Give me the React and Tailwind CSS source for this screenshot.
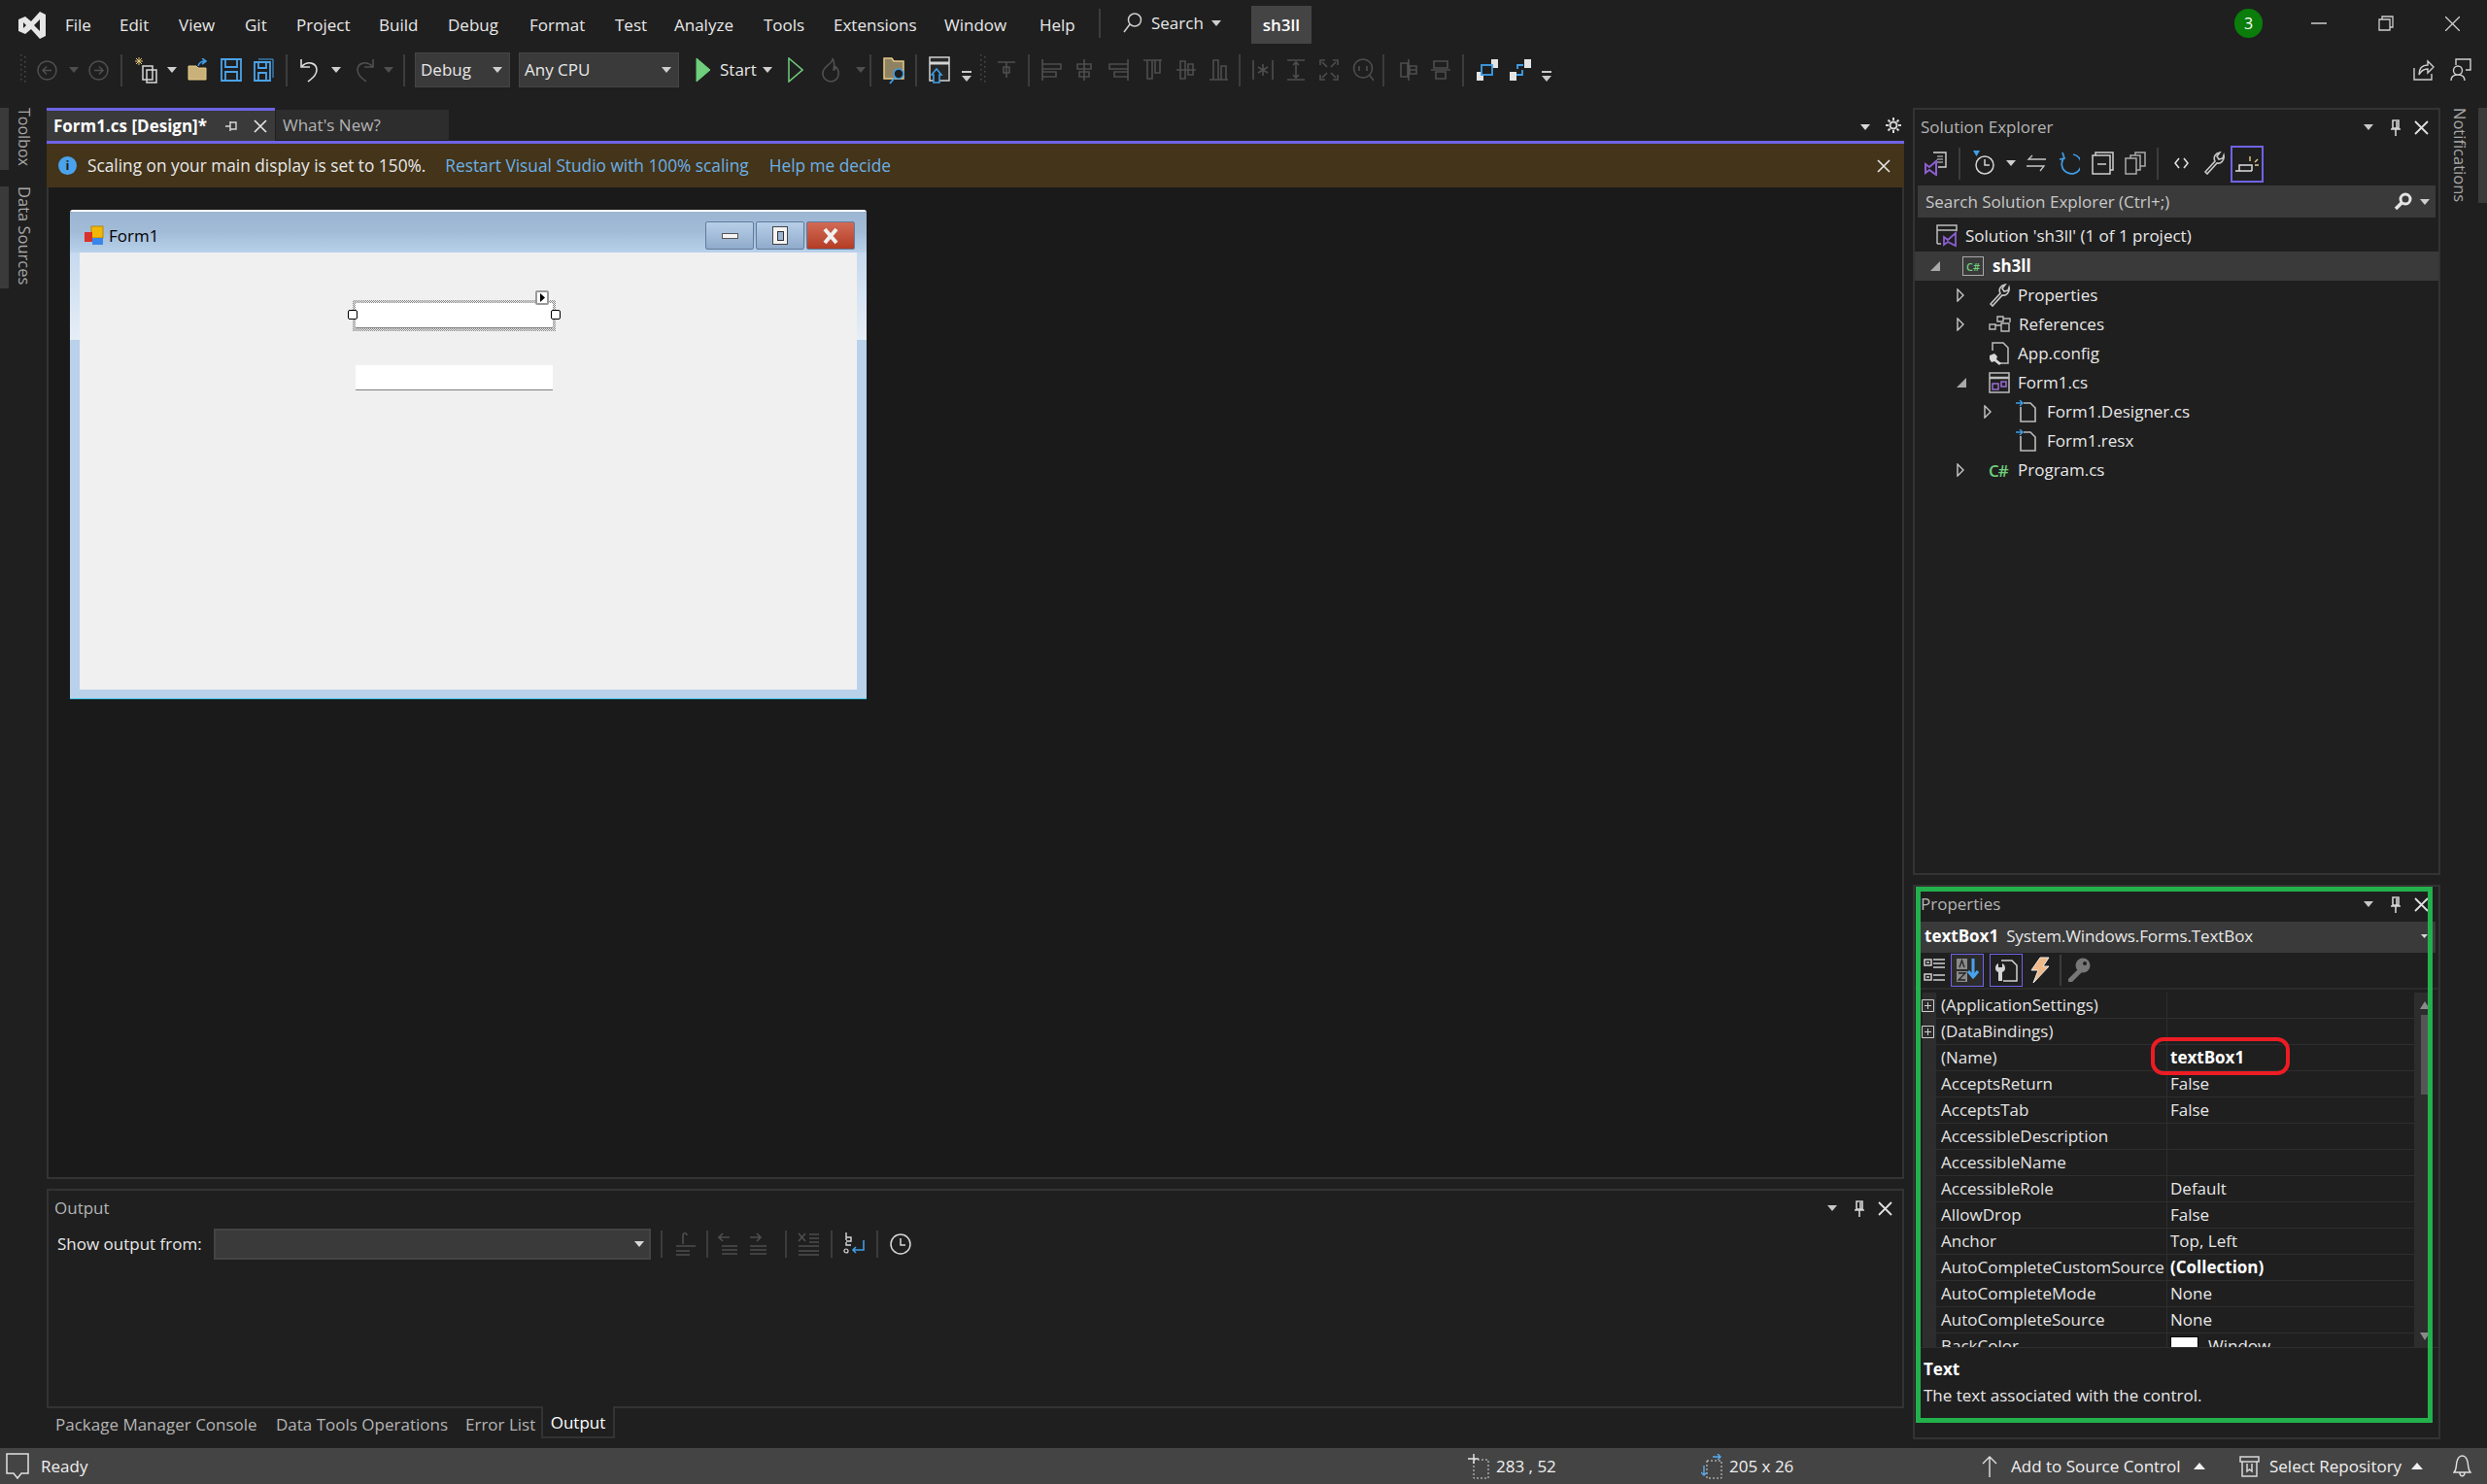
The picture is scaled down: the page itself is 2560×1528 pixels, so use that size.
import { Fragment } from "react";

// small helpers for the toolbar slots and icons
const Slot = ({ w, children }) => (
  <div className={`${w} h-full shrink-0 flex items-center`}>{children}</div>
);

const Ic = ({ w = 22, h = 22, vb, className = "", sw = 1.5, children }) => (
  <svg
    width={w}
    height={h}
    viewBox={vb || `0 0 ${w} ${h}`}
    fill="none"
    stroke="currentColor"
    strokeWidth={sw}
    className={`shrink-0 ${className}`}
  >
    {children}
  </svg>
);

const Tri = ({ className = "text-[#cfcfcf]" }) => (
  <svg width="10" height="6" viewBox="0 0 10 6" className={`shrink-0 ${className}`}>
    <path d="M0 0H10L5 6Z" fill="currentColor" />
  </svg>
);

const Sep = ({ h = "h-[33px]" }) => <div className={`w-[2px] ${h} bg-[#3c3c3c]`} />;

const VsLogo = () => (
  <svg width="30" height="30" viewBox="0 0 30 30" className="shrink-0">
    <path
      fillRule="evenodd"
      d="M1 9L8 6L14 11L23 1L29 4V26L23 29L14 19L8 24L1 21ZM6 12V18L9 15ZM23 9L17 15L23 21Z"
      fill="#e6e6e6"
    />
  </svg>
);

const Grip = ({ h = 30 }) => (
  <svg width="8" height={h} className="shrink-0">
    {Array.from({ length: Math.floor(h / 5) }).map((_, i) => (
      <Fragment key={i}>
        <rect x="1" y={i * 5} width="1.5" height="1.5" fill="#4a4a4a" />
        <rect x="5" y={i * 5 + 2} width="1.5" height="1.5" fill="#4a4a4a" />
      </Fragment>
    ))}
  </svg>
);

const CircleArrow = ({ dir }) => (
  <Ic w={21} h={21} className="text-[#4f4f4f]">
    <circle cx="10.5" cy="10.5" r="9.5" />
    <path d={dir === "l" ? "M15 10.5H6M10 6.5L6 10.5L10 14.5" : "M6 10.5H15M11 6.5L15 10.5L11 14.5"} />
  </Ic>
);

const NewProject = () => (
  <Ic w={25} h={28} className="text-[#d8d8d8]">
    <path d="M9 10H19V24H9Z M13 14H23V27H13Z" />
    <path d="M5 1V9M1 5H9M2 2L8 8M8 2L2 8" stroke="#e8c97a" strokeWidth="1" />
  </Ic>
);

const OpenFolder = () => (
  <svg width="22" height="24" viewBox="0 0 22 24" className="shrink-0">
    <path d="M1 8H9L11 10H19V22H1Z" fill="#c8b27a" stroke="#e8cc86" />
    <path d="M11 8C12 4 15 3 18 3M15 0L19 3L15 6" fill="none" stroke="#3f9ee8" strokeWidth="1.6" />
  </svg>
);

const Save = ({ all }) => (
  <Ic w={22} h={24} className="text-[#4aa3ea]" sw={1.8}>
    {all && <path d="M5 1H20V20" strokeWidth="1" />}
    <path d={all ? "M1 4H17V23H1Z M5 4V10H13V4 M5 23V15H13V23" : "M1 1H21V23H1Z M5 1V9H17V1 M5 23V14H17V23"} />
  </Ic>
);

const Undo = ({ redo }) => (
  <Ic w={22} h={26} className={redo ? "text-[#4f4f4f]" : "text-[#dcdcdc]"} sw={1.6}>
    <g transform={redo ? "matrix(-1 0 0 1 22 0)" : undefined}>
      <path d="M2 2V10H11M3 9C9 3 18 6 18 13C18 18 14 21 9 25" />
    </g>
  </Ic>
);

const Play = ({ outline }) => (
  <svg width="16" height="26" viewBox="0 0 16 26" className="shrink-0">
    <path
      d="M1 1L15 13L1 25Z"
      fill={outline ? "none" : "#6fcf7c"}
      stroke="#6fcf7c"
      strokeWidth={outline ? 1.5 : 1}
    />
  </svg>
);

const Flame = () => (
  <Ic w={20} h={26} className="text-[#4f4f4f]" sw={1.6}>
    <path d="M12 1C13 6 4 8 2 15C1 21 6 25 10 25C15 25 19 21 18 15C18 12 16 11 15 9C15 12 14 13 13 13C14 9 14 5 12 1Z" />
  </Ic>
);

const FolderSearch = () => (
  <svg width="24" height="30" viewBox="0 0 24 30" className="shrink-0">
    <path d="M1 3H9L11 6H21V24H1Z" fill="#8f8263" stroke="#e8cc86" strokeWidth="1.5" />
    <circle cx="16" cy="19" r="5" fill="#1f1f1f" stroke="#3f9ee8" strokeWidth="1.6" />
    <path d="M12 23L7 29" stroke="#3f9ee8" strokeWidth="1.8" />
  </svg>
);

const WindowUp = () => (
  <svg width="23" height="30" viewBox="0 0 23 30" className="shrink-0">
    <path d="M1 2H21V26H1Z" fill="#262626" stroke="#d4d4d4" strokeWidth="1.5" />
    <path d="M1 8H21" stroke="#d4d4d4" strokeWidth="3" />
    <path d="M3 20L8 14L13 20H11V28H5V20Z" fill="#1f1f1f" stroke="#3f9ee8" strokeWidth="1.6" />
  </svg>
);

const DropLine = () => (
  <svg width="10" height="12" viewBox="0 0 10 12" className="shrink-0 mt-[14px]">
    <path d="M0 0H10V2H0ZM0 5H10L5 11Z" fill="#c8c8c8" />
  </svg>
);

// the greyed out layout icons on the designer toolbar
const Align = ({ d, w = 22 }) => (
  <Ic w={w} h={24} className="text-[#4e4e4e]" sw={1.6}>
    <path d={d} />
  </Ic>
);

const Swap = ({ second }) => (
  <svg width="24" height="24" viewBox="0 0 24 24" className="shrink-0">
    <rect x="16" y="1" width="7" height="9" fill="#e4e4e4" />
    <rect x="1" y="14" width="7" height="9" fill="#e4e4e4" />
    {second ? (
      <path d="M9 11V7H15M8 17H14V12" fill="none" stroke="#3f9ee8" strokeWidth="1.8" />
    ) : (
      <rect x="6" y="7" width="11" height="10" fill="#1f1f1f" stroke="#3f9ee8" strokeWidth="1.8" />
    )}
  </svg>
);

const Wrench = ({ w = 22, h = 24 }) => (
  <Ic w={w} h={h} vb="0 0 22 24" className="text-[#c8c8c8]" sw={1.6}>
    <path d="M2 21L12 10C10 6 12 2 17 1L14 5L16 8L20 7L21 4C22 9 18 13 14 12L4 23Z" />
  </Ic>
);

const DocIcon = () => (
  <svg width="22" height="24" viewBox="0 0 22 24" className="shrink-0">
    <path d="M5 7V22H20V8L15 3H8" fill="none" stroke="#bdbdbd" strokeWidth="1.6" />
    <path d="M0 3H7M4 0L7 3L4 6" fill="none" stroke="#3f9ee8" strokeWidth="1.4" />
  </svg>
);

const TreeArrow = ({ open }) =>
  open ? (
    <svg width="10" height="10" viewBox="0 0 10 10" className="shrink-0">
      <path d="M10 0V10H0Z" fill="#a9a9a9" />
    </svg>
  ) : (
    <svg width="8" height="14" viewBox="0 0 8 14" className="shrink-0">
      <path d="M1 1L7 7L1 13Z" fill="none" stroke="#c8c8c8" strokeWidth="1.4" />
    </svg>
  );

const PanelHeader = ({ title }) => (
  <div className="h-[36px] shrink-0 flex items-center pl-[6px] pr-[10px] text-[#b4b4b4]">
    <span className="flex-1">{title}</span>
    <Tri className="text-[#c8c8c8]" />
    <svg width="12" height="17" viewBox="0 0 12 17" className="ml-[17px] text-[#d4d4d4]">
      <path d="M3 1H9V9H3ZM1 10H11M6 10V17M7 2V9" fill="none" stroke="currentColor" strokeWidth="1.6" />
    </svg>
    <svg width="15" height="15" viewBox="0 0 15 15" className="ml-[13px] text-[#e0e0e0]">
      <path d="M1 1L14 14M14 1L1 14" fill="none" stroke="currentColor" strokeWidth="1.8" />
    </svg>
  </div>
);

const menu = [
  ["File", "w-[56px]"],
  ["Edit", "w-[61px]"],
  ["View", "w-[68px]"],
  ["Git", "w-[53px]"],
  ["Project", "w-[85px]"],
  ["Build", "w-[71px]"],
  ["Debug", "w-[84px]"],
  ["Format", "w-[88px]"],
  ["Test", "w-[61px]"],
  ["Analyze", "w-[92px]"],
  ["Tools", "w-[72px]"],
  ["Extensions", "w-[114px]"],
  ["Window", "w-[98px]"],
  ["Help", "w-[61px]"],
];

const tree = [
  { label: "Properties", pl: "pl-[43px]", arrow: "closed", icon: <Wrench /> },
  {
    label: "References",
    pl: "pl-[43px]",
    arrow: "closed",
    icon: (
      <Ic w={23} h={18} className="text-[#bdbdbd]" sw={1.4}>
        <path d="M1 9H7V14H1Z M9 1H15V6H9Z M13 8H21V16H13Z M7 10H13 M15 3H22V7" />
      </Ic>
    ),
  },
  {
    label: "App.config",
    pl: "pl-[43px]",
    arrow: null,
    icon: (
      <Ic w={22} h={24} className="text-[#bdbdbd]" sw={1.5}>
        <path d="M4 9V1H15L20 6V22H12" />
        <path d="M1 14L6 12L9 15L8 18L13 22L11 24L6 20L3 21L1 18Z" fill="#d8d8d8" stroke="none" />
      </Ic>
    ),
  },
  {
    label: "Form1.cs",
    pl: "pl-[43px]",
    arrow: "open",
    icon: (
      <Ic w={22} h={22} className="text-[#bdbdbd]" sw={1.5}>
        <path d="M1 1H21V21H1Z" />
        <path d="M1 6H21" strokeWidth="2.5" />
        <path d="M4 12H10V18H4Z M13 10H18V15H13Z" stroke="#9a6fd6" />
      </Ic>
    ),
  },
  { label: "Form1.Designer.cs", pl: "pl-[71px]", arrow: "closed", icon: <DocIcon />, text: "ml-[10px]" },
  { label: "Form1.resx", pl: "pl-[71px]", arrow: null, icon: <DocIcon />, text: "ml-[10px]" },
  {
    label: "Program.cs",
    pl: "pl-[43px]",
    arrow: "closed",
    icon: (
      <span className="w-[22px] shrink-0 text-[#6fcf7c] font-semibold text-[17px] leading-none tracking-[-1px]">
        C#
      </span>
    ),
  },
];

const props = [
  ["(ApplicationSettings)", "", "plus"],
  ["(DataBindings)", "", "plus"],
  ["(Name)", "textBox1", "name"],
  ["AcceptsReturn", "False"],
  ["AcceptsTab", "False"],
  ["AccessibleDescription", ""],
  ["AccessibleName", ""],
  ["AccessibleRole", "Default"],
  ["AllowDrop", "False"],
  ["Anchor", "Top, Left"],
  ["AutoCompleteCustomSource", "(Collection)", "bold"],
  ["AutoCompleteMode", "None"],
  ["AutoCompleteSource", "None"],
  ["BackColor", "Window", "color"],
];

const Handle = ({ className }) => (
  <div className={`absolute top-[7px] w-[10px] h-[10px] bg-white border border-black rounded-[2px] ${className}`} />
);

const TextBox = ({ selected }) => (
  <div className="relative w-[203px] h-[26px] ml-[284px]">
    {selected && (
      <div className="absolute -inset-[3px] bg-[repeating-conic-gradient(#8a8a8a_0_25%,#f0f0f0_0_50%)] bg-[length:2px_2px]" />
    )}
    <div className="absolute inset-0 bg-white border-b border-[#808080]" />
    {selected && (
      <>
        <Handle className="-left-[8px]" />
        <Handle className="-right-[8px]" />
        <div className="absolute -top-[13px] right-[4px] w-[14px] h-[15px] bg-white border-2 border-[#9a9a9a] rounded-[2px] flex items-center justify-center">
          <svg width="5" height="9" viewBox="0 0 5 9">
            <path d="M0 0L5 4.5L0 9Z" fill="black" />
          </svg>
        </div>
      </>
    )}
  </div>
);

const Toolbar = () => (
  <div className="h-[40px] shrink-0 flex items-center pl-[20px]">
    <Slot w="w-[18px]"><Grip h={32} /></Slot>
    <Slot w="w-[33px]"><CircleArrow dir="l" /></Slot>
    <Slot w="w-[20px]"><Tri className="text-[#4f4f4f]" /></Slot>
    <Slot w="w-[33px]"><CircleArrow dir="r" /></Slot>
    <Slot w="w-[14px]"><Sep /></Slot>
    <Slot w="w-[34px]"><NewProject /></Slot>
    <Slot w="w-[21px]"><Tri /></Slot>
    <Slot w="w-[34px]"><OpenFolder /></Slot>
    <Slot w="w-[34px]"><Save /></Slot>
    <Slot w="w-[33px]"><Save all /></Slot>
    <Slot w="w-[14px]"><Sep /></Slot>
    <Slot w="w-[33px]"><Undo /></Slot>
    <Slot w="w-[23px]"><Tri /></Slot>
    <Slot w="w-[31px]"><Undo redo /></Slot>
    <Slot w="w-[20px]"><Tri className="text-[#4f4f4f]" /></Slot>
    <Slot w="w-[12px]"><Sep /></Slot>
    <div className="w-[98px] h-[36px] shrink-0 bg-[#3a3a3a] border border-[#444] flex items-center justify-between pl-[5px] pr-[7px]">
      <span>Debug</span>
      <Tri />
    </div>
    <div className="w-[165px] h-[36px] shrink-0 ml-[9px] bg-[#3a3a3a] border border-[#444] flex items-center justify-between pl-[5px] pr-[7px]">
      <span>Any CPU</span>
      <Tri />
    </div>
    <div className="w-[17px] shrink-0" />
    <Slot w="w-[25px]"><Play /></Slot>
    <Slot w="w-[44px]"><span>Start</span></Slot>
    <Slot w="w-[26px]"><Tri /></Slot>
    <Slot w="w-[34px]"><Play outline /></Slot>
    <Slot w="w-[36px]"><Flame /></Slot>
    <Slot w="w-[14px]"><Tri className="text-[#4f4f4f]" /></Slot>
    <Slot w="w-[14px]"><Sep /></Slot>
    <Slot w="w-[33px]"><FolderSearch /></Slot>
    <Slot w="w-[14px]"><Sep /></Slot>
    <Slot w="w-[34px]"><WindowUp /></Slot>
    <Slot w="w-[18px]"><DropLine /></Slot>
    <Slot w="w-[18px]"><Grip h={32} /></Slot>
    <Slot w="w-[32px]"><Align d="M1 4H19M10 4V20M7 9H13V15H7Z" w={20} /></Slot>
    <Slot w="w-[14px]"><Sep /></Slot>
    <Slot w="w-[35px]"><Align d="M1 1V23M1 6H20V11H1M1 14H15V19H1" /></Slot>
    <Slot w="w-[33px]"><Align d="M9 1V23M2 6H16V11H2ZM4 14H14V19H4Z" w={18} /></Slot>
    <Slot w="w-[36px]"><Align d="M21 1V23M2 6H21V11H2ZM7 14H21V19H7Z" /></Slot>
    <Slot w="w-[34px]"><Align d="M1 2H20M5 2V21H10V2M13 2V15H18V2" /></Slot>
    <Slot w="w-[34px]"><Align d="M1 12H21M5 3V21H10V3ZM13 6V17H18V6Z" /></Slot>
    <Slot w="w-[31px]"><Align d="M1 22H20M5 2V22H10V2ZM13 8V22H18V8Z" /></Slot>
    <Slot w="w-[14px]"><Sep /></Slot>
    <Slot w="w-[34px]"><Align d="M1 2V22M21 2V22M11 6V18M6 9L16 15M16 9L6 15" /></Slot>
    <Slot w="w-[34px]"><Align d="M2 2H20M2 22H20M11 4V20M8 7L11 4L14 7M8 17L11 20L14 17" /></Slot>
    <Slot w="w-[35px]"><Align d="M2 7V2H7M15 2H20V7M2 17V22H7M15 22H20V17M4 4L9 9M18 4L13 9M4 20L9 15M18 20L13 15" /></Slot>
    <Slot w="w-[31px]"><Align d="M11 1A9.5 9.5 0 1 0 11 20A9.5 9.5 0 1 0 11 1ZM18 18L23 24M7 8V13M15 8V13" /></Slot>
    <Slot w="w-[18px]"><Sep /></Slot>
    <Slot w="w-[31px]"><Align d="M9 1V23M1 5H8V19H1ZM10 8H17V16H10ZM9 12H17" w={18} /></Slot>
    <Slot w="w-[33px]"><Align d="M1 12H21M4 3H18V10H4ZM6 14H16V21H6Z" /></Slot>
    <Slot w="w-[14px]"><Sep /></Slot>
    <Slot w="w-[34px]"><Swap /></Slot>
    <Slot w="w-[34px]"><Swap second /></Slot>
    <Slot w="w-[10px]"><DropLine /></Slot>
    <div className="flex-1" />
    <div className="w-[38px] shrink-0 text-[#cfcfcf]">
      <Ic w={22} h={22} sw={1.4}>
        <path d="M1 9V21H19V15M6 16C6 9 10 6 15 6V2L21 8L15 14V10C11 10 8 12 6 16Z" />
      </Ic>
    </div>
    <div className="w-[38px] shrink-0 text-[#cfcfcf]">
      <Ic w={22} h={24} sw={1.4}>
        <path d="M6 7V1H21V12H16M8 8A4.5 4.5 0 1 0 8 17A4.5 4.5 0 1 0 8 8ZM1 23C1 18 4 17 8 17C12 17 15 18 15 23" />
      </Ic>
    </div>
  </div>
);

const MenuBar = () => (
  <div className="h-[52px] shrink-0 flex items-center">
    <div className="w-[67px] pl-[18px] shrink-0">
      <VsLogo />
    </div>
    {menu.map(([label, w]) => (
      <div key={label} className={`${w} shrink-0`}>
        {label}
      </div>
    ))}
    <div className="w-[25px] shrink-0 h-[30px] mb-[4px]">
      <div className="w-[2px] h-full bg-[#3c3c3c]" />
    </div>
    <Ic w={20} h={22} className="text-[#cfcfcf] mb-[4px]" sw={1.5}>
      <path d="M12 1A6.5 6.5 0 1 0 12 14A6.5 6.5 0 1 0 12 1ZM7 12L1 20" />
    </Ic>
    <span className="ml-[9px] mb-[4px]">Search</span>
    <Tri className="ml-[8px] mb-[4px] text-[#cfcfcf]" />
    <div className="ml-[31px] mb-[1px] w-[62px] h-[39px] bg-[#444] flex items-center justify-center font-semibold text-white">
      sh3ll
    </div>
    <div className="flex-1" />
    <div className="w-[29px] h-[30px] mb-[4px] rounded-full bg-[#0a7d0a] flex items-center justify-center text-white text-[16px]">
      3
    </div>
    <Ic w={16} h={2} className="text-[#cfcfcf] ml-[50px] mb-[4px]">
      <path d="M0 1H16" />
    </Ic>
    <Ic w={16} h={16} className="text-[#cfcfcf] ml-[53px] mb-[4px]" sw={1.3}>
      <path d="M1 4H12V15H1ZM4 4V1H15V12H12" />
    </Ic>
    <Ic w={15} h={15} className="text-[#cfcfcf] ml-[53px] mr-[28px] mb-[4px]" sw={1.3}>
      <path d="M0 0L15 15M15 0L0 15" />
    </Ic>
  </div>
);

const WinBtn = ({ className, children }) => (
  <div className={`w-[50px] h-[29px] rounded-[2px] border border-[#5f7c9e] flex items-center justify-center ${className}`}>
    {children}
  </div>
);

const FormWindow = () => (
  <div className="w-[820px] h-[504px] ml-[22px] mt-[23px] flex flex-col border-t-2 border-white rounded-t-[3px] overflow-hidden">
    <div className="h-[42px] shrink-0 bg-gradient-to-b from-[#9cb5d2] via-[#a2bcd8] to-[#b9d1ea] flex items-center pl-[14px] pr-[12px] pt-[7px]">
      <svg width="21" height="21" viewBox="0 0 21 21" className="shrink-0">
        <rect x="8" y="1" width="12" height="12" fill="#f2b705" stroke="#b98600" />
        <rect x="1" y="7" width="8" height="10" fill="#d9312b" />
        <rect x="9" y="13" width="11" height="7" fill="#3a86e8" />
      </svg>
      <span className="ml-[5px] text-black flex-1">Form1</span>
      <div className="flex gap-[2px]">
        <WinBtn className="bg-gradient-to-b from-[#b8cfe8] to-[#8fabcb]">
          <div className="w-[17px] h-[6px] bg-[#f4f4f4] border border-[#555]" />
        </WinBtn>
        <WinBtn className="bg-gradient-to-b from-[#b8cfe8] to-[#8fabcb]">
          <div className="w-[16px] h-[19px] bg-[#f4f4f4] border border-[#444] flex items-center justify-center">
            <div className="w-[7px] h-[10px] border border-[#333] bg-[#9cb5d2]" />
          </div>
        </WinBtn>
        <WinBtn className="bg-gradient-to-b from-[#d26a55] to-[#b33c24] border-[#5a1a1a]">
          <svg width="18" height="18" viewBox="0 0 18 18">
            <path d="M3 2L15 16M15 2L3 16" stroke="#f0f0f0" strokeWidth="4" />
          </svg>
        </WinBtn>
      </div>
    </div>
    <div className="flex-1 flex min-h-0">
      <div className="w-[10px] flex flex-col">
        <div className="h-[90px] bg-gradient-to-b from-[#c6d9ee] to-[#e6eef7]" />
        <div className="flex-1 bg-[#b9d1ea]" />
      </div>
      <div className="flex-1 bg-[#f0f0f0] flex flex-col pt-[52px]">
        <TextBox selected />
        <div className="h-[38px] shrink-0" />
        <TextBox />
      </div>
      <div className="w-[10px] flex flex-col">
        <div className="h-[90px] bg-gradient-to-b from-[#c6d9ee] to-[#e6eef7]" />
        <div className="flex-1 bg-[#b9d1ea]" />
      </div>
    </div>
    <div className="h-[10px] shrink-0 bg-[#b9d1ea] border-b border-[#39c2e0]" />
  </div>
);

const OutputToolbar = () => (
  <div className="h-[38px] shrink-0 flex items-center pl-[9px]">
    <span className="w-[161px] shrink-0">Show output from:</span>
    <div className="w-[450px] h-[32px] shrink-0 bg-[#3a3a3a] border-2 border-[#444] flex items-center justify-end pr-[5px]">
      <Tri className="text-[#d8d8d8]" />
    </div>
    <div className="w-[10px] shrink-0" />
    <Slot w="w-[14px]"><Sep h="h-[28px]" /></Slot>
    <Slot w="w-[33px]">
      <Align d="M9 12V3C9 0 13 0 13 3M2 14H22M2 19H16M2 23H16" />
    </Slot>
    <Slot w="w-[12px]"><Sep h="h-[28px]" /></Slot>
    <Slot w="w-[32px]">
      <Align d="M1 5H12M5 1L1 5L5 9M4 14H20M4 18H20M4 22H20" />
    </Slot>
    <Slot w="w-[37px]">
      <Align d="M1 5H12M8 1L12 5L8 9M1 14H18M1 18H18M1 22H18" />
    </Slot>
    <Slot w="w-[13px]"><Sep h="h-[28px]" /></Slot>
    <Slot w="w-[34px]">
      <Align d="M1 1L8 9M8 1L1 9M12 2H22M12 6H22M12 10H22M1 14H22M1 19H22M1 23H22" />
    </Slot>
    <Slot w="w-[13px]"><Sep h="h-[28px]" /></Slot>
    <Slot w="w-[34px]">
      <svg width="23" height="26" viewBox="0 0 23 26">
        <path d="M3 1V9M3 6H8V10H3M8 14H3V11" fill="none" stroke="#d8d8d8" strokeWidth="1.4" />
        <path d="M21 9V19H10M13 16L10 19L13 22" fill="none" stroke="#3f9ee8" strokeWidth="1.6" />
        <circle cx="3" cy="20" r="2" fill="none" stroke="#d8d8d8" strokeWidth="1.2" />
      </svg>
    </Slot>
    <Slot w="w-[14px]"><Sep h="h-[28px]" /></Slot>
    <Ic w={22} h={26} vb="0 0 22 22" className="text-[#d8d8d8]" sw={1.5}>
      <circle cx="11" cy="11" r="10" />
      <path d="M11 5V12H16" />
    </Ic>
  </div>
);

const SolutionExplorer = () => (
  <div className="h-[790px] shrink-0 border-2 border-[#333] flex flex-col">
    <PanelHeader title="Solution Explorer" />
    <div className="h-[38px] shrink-0 flex items-center pl-[10px]">
      <Slot w="w-[35px]">
        <svg width="24" height="26" viewBox="0 0 24 26">
          <path d="M9 2H22V17H14" fill="none" stroke="#d4d4d4" strokeWidth="1.4" />
          <path d="M13 6H19M13 9H19M13 12H19" stroke="#d4d4d4" strokeWidth="1.2" />
          <path d="M1 14L5 17L12 11V25L5 20L1 23Z" fill="#1f1f1f" stroke="#8d5fd3" strokeWidth="2" />
        </svg>
      </Slot>
      <Slot w="w-[15px]"><Sep /></Slot>
      <Slot w="w-[34px]">
        <svg width="22" height="26" viewBox="0 0 22 26">
          <path d="M0 0H7L3.5 6Z" fill="#3f9ee8" />
          <circle cx="12" cy="15" r="9" fill="none" stroke="#d4d4d4" strokeWidth="1.5" />
          <path d="M12 9V15H17" fill="none" stroke="#d4d4d4" strokeWidth="1.5" />
        </svg>
      </Slot>
      <Slot w="w-[21px]"><Tri /></Slot>
      <Slot w="w-[33px]">
        <Ic w={20} h={18} className="text-[#c8c8c8]" sw={1.3}>
          <path d="M20 5H2L6 1M0 12H18L14 17" />
        </Ic>
      </Slot>
      <Slot w="w-[34px]">
        <Ic w={22} h={24} className="text-[#3f9ee8]" sw={1.7}>
          <path d="M4 1L6 7L1 8M6 6A10 10 0 1 0 15 3" />
        </Ic>
      </Slot>
      <Slot w="w-[34px]">
        <Ic w={23} h={24} className="text-[#cfcfcf]" sw={1.5}>
          <path d="M1 4H19V23H1ZM4 4V1H22V19H19M6 13H15" />
        </Ic>
      </Slot>
      <Slot w="w-[33px]">
        <Ic w={22} h={24} className="text-[#aaa]" sw={1.5}>
          <path d="M1 7H12V23H1ZM6 7V4H16V19H12M11 4V1H21V15H16" />
        </Ic>
      </Slot>
      <Slot w="w-[18px]"><Sep /></Slot>
      <Slot w="w-[30px]">
        <Ic w={15} h={12} className="text-[#e0e0e0]" sw={1.6}>
          <path d="M5 1L1 6L5 11M10 1L14 6L10 11" />
        </Ic>
      </Slot>
      <Slot w="w-[28px]"><Wrench /></Slot>
      <div className="w-[34px] h-[38px] mt-[1px] shrink-0 border-2 border-[#6f63e6] flex items-center justify-center">
        <svg width="24" height="16" viewBox="0 0 24 16">
          <path d="M0 15H17M4 15V9H17V15" fill="none" stroke="#e0e0e0" strokeWidth="1.5" />
          <path d="M15 0V5M20 6L23 3M20 9H24" stroke="#e8cc86" strokeWidth="1.4" fill="none" />
        </svg>
      </div>
    </div>
    <div className="h-[33px] mt-[4px] mx-[3px] shrink-0 bg-[#3a3a3a] flex items-center pl-[8px] pr-[6px] text-[#c8c8c8]">
      <span className="flex-1">Search Solution Explorer (Ctrl+;)</span>
      <svg width="19" height="19" viewBox="0 0 19 19" className="mr-[8px]">
        <circle cx="12" cy="7" r="5" fill="none" stroke="#e4e4e4" strokeWidth="3" />
        <path d="M8 11L2 17" stroke="#e4e4e4" strokeWidth="3.5" />
      </svg>
      <Tri />
    </div>
    <div className="h-[32px] shrink-0 flex items-center pl-[22px] mt-[3px]">
      <svg width="22" height="24" viewBox="0 0 22 24" className="shrink-0">
        <path d="M1 20V1H21V7M1 6H21M1 20H5" fill="none" stroke="#bdbdbd" strokeWidth="1.5" />
        <path d="M8 13L12 16L20 9V22L12 18L8 21Z" fill="#1f1f1f" stroke="#8d5fd3" strokeWidth="1.8" />
      </svg>
      <span className="ml-[8px]">Solution 'sh3ll' (1 of 1 project)</span>
    </div>
    <div className="h-[30px] shrink-0 bg-[#3a3a3a] flex items-center pl-[16px]">
      <div className="w-[33px]"><TreeArrow open /></div>
      <div className="w-[22px] h-[20px] border border-[#aaa] flex items-center justify-center text-[#6fcf7c] text-[11px] font-semibold leading-none shrink-0">
        C#
      </div>
      <span className="ml-[9px] font-bold text-white">sh3ll</span>
    </div>
    {tree.map((row) => (
      <div key={row.label} className={`h-[30px] shrink-0 flex items-center ${row.pl}`}>
        <div className="w-[33px] shrink-0 flex">
          {row.arrow === "open" ? <TreeArrow open /> : row.arrow ? <TreeArrow /> : null}
        </div>
        {row.icon}
        <span className={row.text || "ml-[8px]"}>{row.label}</span>
      </div>
    ))}
  </div>
);

const PropertiesPanel = () => (
  <div className="relative flex-1 min-h-0 border-2 border-[#333] flex flex-col">
    <PanelHeader title="Properties" />
    <div className="h-[32px] mx-[3px] shrink-0 bg-[#3a3a3a] flex items-center pl-[7px] pr-[8px] pb-[2px]">
      <span className="font-bold text-white">textBox1</span>
      <span className="ml-[8px] flex-1 tracking-[-0.1px]">System.Windows.Forms.TextBox</span>
      <Tri className="w-[7px] text-[#d8d8d8]" />
    </div>
    <div className="h-[38px] shrink-0 flex items-center pl-[9px] border-b-2 border-[#2b2b2b]">
      <Slot w="w-[28px]">
        <Ic w={23} h={26} className="text-[#cfcfcf]" sw={1.5}>
          <path d="M1 2H8V8H1ZM3 5H6M1 17H8V23H1ZM3 20H6M10 2H22M10 6H22M10 10H22M10 18H22M10 23H22" />
        </Ic>
      </Slot>
      <div className="w-[34px] h-[34px] shrink-0 border border-[#6f63e6] bg-[#2c2c2c] flex items-center justify-center">
        <svg width="24" height="28" viewBox="0 0 24 28">
          <rect x="1" y="2" width="11" height="11" fill="#8a8a8a" />
          <rect x="1" y="15" width="11" height="11" fill="#8a8a8a" />
          <path d="M4 11L6.5 4L9 11M3 17H10L3 24H10" fill="none" stroke="#222" strokeWidth="1.3" />
          <path d="M18 2V20M13 15L18 21L23 15" fill="none" stroke="#4aa3ea" strokeWidth="3" />
        </svg>
      </div>
      <div className="w-[6px] shrink-0" />
      <div className="w-[34px] h-[34px] shrink-0 border border-[#6f63e6] flex items-center justify-center">
        <svg width="24" height="26" viewBox="0 0 24 26">
          <path d="M7 3H18L23 8V24H9" fill="none" stroke="#d4d4d4" strokeWidth="1.5" />
          <path d="M1 11C1 7 4 6 4 6V10H8V6C8 6 11 7 11 11C11 14 8 15 8 15V24H4V15C4 15 1 14 1 11Z" fill="#d4d4d4" />
        </svg>
      </div>
      <div className="w-[7px] shrink-0" />
      <Slot w="w-[31px]">
        <svg width="21" height="28" viewBox="0 0 21 28">
          <path d="M11 1H20L14 10H20L4 27L9 14H2Z" fill="#f0b988" stroke="#eee" strokeWidth="1" />
        </svg>
      </Slot>
      <Slot w="w-[7px]"><Sep h="h-[32px]" /></Slot>
      <svg width="25" height="26" viewBox="0 0 25 26">
        <circle cx="17" cy="8" r="7.5" fill="#777" />
        <circle cx="19" cy="6" r="2" fill="#1f1f1f" />
        <path d="M12 12L2 22V25H6L16 15Z" fill="#777" />
      </svg>
    </div>
    <div className="h-[368px] shrink-0 flex overflow-hidden pt-[3px]">
      <div className="w-[8px] shrink-0" />
      <div className="w-[506px] shrink-0 flex flex-col">
        {props.map(([name, value, kind]) => (
          <div key={name} className="h-[27px] shrink-0 flex items-center border-b border-[#2e2e2e]">
            <div className="w-[14px] h-full shrink-0 bg-[#2d2d2d] flex items-center">
              {kind === "plus" && (
                <svg width="13" height="13" viewBox="0 0 13 13" className="shrink-0 -ml-[1px]">
                  <path d="M0.5 0.5H12.5V12.5H0.5ZM3 6.5H10M6.5 3V10" fill="none" stroke="#d0d0d0" />
                </svg>
              )}
            </div>
            <div className="w-[238px] h-full shrink-0 pl-[5px] flex items-center whitespace-nowrap overflow-hidden border-r border-[#2e2e2e] text-[#e4e4e4]">
              {name}
            </div>
            <div className="relative flex-1 h-full pl-[3px] flex items-center">
              {kind === "color" && <div className="w-[29px] h-[21px] bg-white border border-black mr-[10px]" />}
              <span className={kind === "name" || kind === "bold" ? "font-bold text-white" : ""}>{value}</span>
              {kind === "name" && (
                <div className="absolute -left-[17px] -top-[8px] w-[143px] h-[39px] border-[4px] border-[#ed1c24] rounded-[13px]" />
              )}
            </div>
          </div>
        ))}
      </div>
      <div className="w-[16px] shrink-0 bg-[#2d2d2d] relative">
        <svg width="10" height="8" viewBox="0 0 10 8" className="absolute left-[6px] top-[9px]">
          <path d="M5 0L10 8H0Z" fill="#8a8a8a" />
        </svg>
        <div className="absolute left-[7px] top-[23px] w-[8px] h-[82px] bg-[#555]" />
        <svg width="10" height="8" viewBox="0 0 10 8" className="absolute left-[6px] top-[350px]">
          <path d="M0 0H10L5 8Z" fill="#8a8a8a" />
        </svg>
      </div>
    </div>
    <div className="flex-1 border-t border-[#2e2e2e] pl-[9px] pt-[8px] bg-[#1f1f1f] leading-[27px]">
      <div className="font-bold text-white">Text</div>
      <div>The text associated with the control.</div>
    </div>
    <div className="absolute left-[1px] top-0 w-[532px] h-[552px] border-[5px] border-[#22b14c] pointer-events-none" />
  </div>
);

const App = () => (
  <div className="w-[2560px] h-[1528px] overflow-hidden bg-[#1f1f1f] text-[#e8e8e8] text-[17px] flex flex-col font-['Open_Sans','Noto_Sans',sans-serif]">
    <MenuBar />
    <Toolbar />
    <div className="h-[1380px] shrink-0 mt-[19px] flex pb-[9px]">
      {/* left rail */}
      <div className="w-[48px] shrink-0 flex flex-col text-[#a8a8a8] relative">
        <div className="h-[64px] flex">
          <div className="w-[9px] bg-[#3a3a3a]" />
          <span className="[writing-mode:vertical-rl] ml-[6px] leading-[20px] text-[16px]">Toolbox</span>
        </div>
        <div className="h-[105px] mt-[17px] flex">
          <div className="w-[9px] bg-[#3a3a3a]" />
          <span className="[writing-mode:vertical-rl] ml-[6px] leading-[20px] text-[16.5px] whitespace-nowrap">Data Sources</span>
        </div>
      </div>

      {/* center */}
      <div className="w-[1912px] shrink-0 flex flex-col">
        <div className="h-[34px] shrink-0 flex items-end">
          <div className="w-[235px] h-[34px] shrink-0 bg-[#3a3a3a] border-t-[3px] border-[#6f63e6] flex items-center pl-[7px] pr-[8px]">
            <span className="font-bold text-white flex-1 text-[17px] whitespace-nowrap">Form1.cs [Design]*</span>
            <svg width="13" height="13" viewBox="0 0 13 13" className="shrink-0 mr-[16px]">
              <path d="M0 7H5M5 2V12M5 3H11V10H5" fill="none" stroke="#d8d8d8" strokeWidth="1.4" />
            </svg>
            <svg width="14" height="14" viewBox="0 0 14 14" className="shrink-0">
              <path d="M1 1L13 13M13 1L1 13" stroke="#e4e4e4" strokeWidth="1.7" />
            </svg>
          </div>
          <div className="w-[178px] h-[31px] mb-[1px] ml-[1px] shrink-0 bg-[#2d2d2d] flex items-center pl-[7px] text-[#b4b4b4]">
            What's New?
          </div>
          <div className="flex-1" />
          <Tri className="mb-[11px] mr-[16px] text-[#d8d8d8]" />
          <svg width="16" height="16" viewBox="0 0 16 16" className="mb-[8px] mr-[3px] text-[#d8d8d8] shrink-0">
            <circle cx="8" cy="8" r="3.5" fill="none" stroke="currentColor" strokeWidth="2" />
            <path d="M8 0V3M8 13V16M0 8H3M13 8H16M2.5 2.5L4.5 4.5M11.5 11.5L13.5 13.5M13.5 2.5L11.5 4.5M4.5 11.5L2.5 13.5" stroke="currentColor" strokeWidth="2" />
          </svg>
        </div>
        <div className="h-[3px] shrink-0 bg-[#6f63e6]" />
        <div className="h-[45px] shrink-0 bg-[#43341a] flex items-center pl-[12px] pr-[14px] text-[17.3px]">
          <div className="w-[19px] h-[19px] rounded-full bg-[#4aa3ea] flex items-center justify-center text-[#1f1f1f] text-[13px] font-bold shrink-0">
            i
          </div>
          <span className="ml-[11px]">Scaling on your main display is set to 150%.</span>
          <span className="ml-[20px] text-[#6cb0e6]">Restart Visual Studio with 100% scaling</span>
          <span className="ml-[21px] text-[#6cb0e6]">Help me decide</span>
          <div className="flex-1" />
          <svg width="14" height="14" viewBox="0 0 14 14" className="shrink-0">
            <path d="M1 1L13 13M13 1L1 13" stroke="#e4e4e4" strokeWidth="1.7" />
          </svg>
        </div>
        <div className="h-[1021px] shrink-0 bg-[#1a1a1a] border-x-2 border-b-2 border-[#333] overflow-hidden">
          <FormWindow />
        </div>
        <div className="h-[226px] mt-[10px] shrink-0 border-2 border-[#333] flex flex-col">
          <PanelHeader title="Output" />
          <OutputToolbar />
        </div>
        <div className="h-[32px] shrink-0 flex text-[#b4b4b4] pl-[9px] leading-[30px] -mt-[2px]">
          <span className="w-[227px] shrink-0 mt-[4px] whitespace-nowrap">Package Manager Console</span>
          <span className="w-[195px] shrink-0 mt-[4px] whitespace-nowrap">Data Tools Operations</span>
          <span className="w-[78px] shrink-0 mt-[4px] whitespace-nowrap">Error List</span>
          <div className="w-[76px] h-[33px] pt-[2px] text-center bg-[#1f1f1f] border-x-2 border-b-2 border-[#333] text-white">Output</div>
        </div>
      </div>

      {/* right */}
      <div className="w-[543px] shrink-0 ml-[9px] flex flex-col gap-[10px]">
        <SolutionExplorer />
        <PropertiesPanel />
      </div>

      {/* right rail */}
      <div className="w-[48px] shrink-0 flex justify-end text-[#a8a8a8]">
        <span className="[writing-mode:vertical-rl] mr-[9px] leading-[20px] text-[16.5px] h-fit">Notifications</span>
        <div className="w-[9px] h-[98px] bg-[#3a3a3a]" />
      </div>
    </div>

    {/* status bar */}
    <div className="flex-1 bg-[#444] flex items-center text-[#f0f0f0]">
      <div className="w-[42px] pl-[6px] shrink-0">
        <svg width="24" height="28" viewBox="0 0 24 28">
          <path d="M1 1H23V21H16L12 26L8 21H1Z" fill="none" stroke="#e0e0e0" strokeWidth="1.5" />
        </svg>
      </div>
      <span className="w-[1469px] shrink-0">Ready</span>
      <div className="w-[29px] shrink-0">
        <svg width="22" height="26" viewBox="0 0 22 26">
          <path d="M6 6H21V25H6Z" fill="none" stroke="#d8d8d8" strokeDasharray="2 2" />
          <path d="M6 0V10M0 5H11" stroke="#e8e8e8" strokeWidth="1.4" />
        </svg>
      </div>
      <span className="w-[211px] shrink-0">283 , 52</span>
      <div className="w-[29px] shrink-0">
        <svg width="22" height="26" viewBox="0 0 22 26">
          <path d="M6 7H21V25H6Z" fill="none" stroke="#d8d8d8" strokeDasharray="2 2" />
          <path d="M12 3H20M17 0L20 3L17 6M3 12V22M0 19L3 22L6 19" fill="none" stroke="#5aa9ea" strokeWidth="1.4" />
        </svg>
      </div>
      <span className="w-[260px] shrink-0">205 x 26</span>
      <svg width="16" height="22" viewBox="0 0 16 22" className="shrink-0 mr-[14px]">
        <path d="M8 22V1M1 8L8 1L15 8" fill="none" stroke="#e0e0e0" strokeWidth="1.4" />
      </svg>
      <span className="w-[188px] shrink-0 whitespace-nowrap">Add to Source Control</span>
      <svg width="12" height="7" viewBox="0 0 12 7" className="shrink-0 mr-[35px]">
        <path d="M0 7H12L6 0Z" fill="#f0f0f0" />
      </svg>
      <svg width="21" height="22" viewBox="0 0 21 22" className="shrink-0 mr-[10px]">
        <path d="M1 1H20V6H1ZM3 6V21H18V6M8 8V16L10.5 14L13 16V8" fill="none" stroke="#d8d8d8" strokeWidth="1.5" />
      </svg>
      <span className="w-[146px] shrink-0 whitespace-nowrap">Select Repository</span>
      <svg width="12" height="7" viewBox="0 0 12 7" className="shrink-0 mr-[31px]">
        <path d="M0 7H12L6 0Z" fill="#f0f0f0" />
      </svg>
      <svg width="19" height="24" viewBox="0 0 19 24" className="shrink-0">
        <path d="M1 18C4 15 3 11 4 7C5 3 7 1 9.5 1C12 1 14 3 15 7C16 11 15 15 18 18ZM7 18C7 23 12 23 12 18" fill="none" stroke="#e0e0e0" strokeWidth="1.4" />
      </svg>
    </div>
  </div>
);

export default App;
